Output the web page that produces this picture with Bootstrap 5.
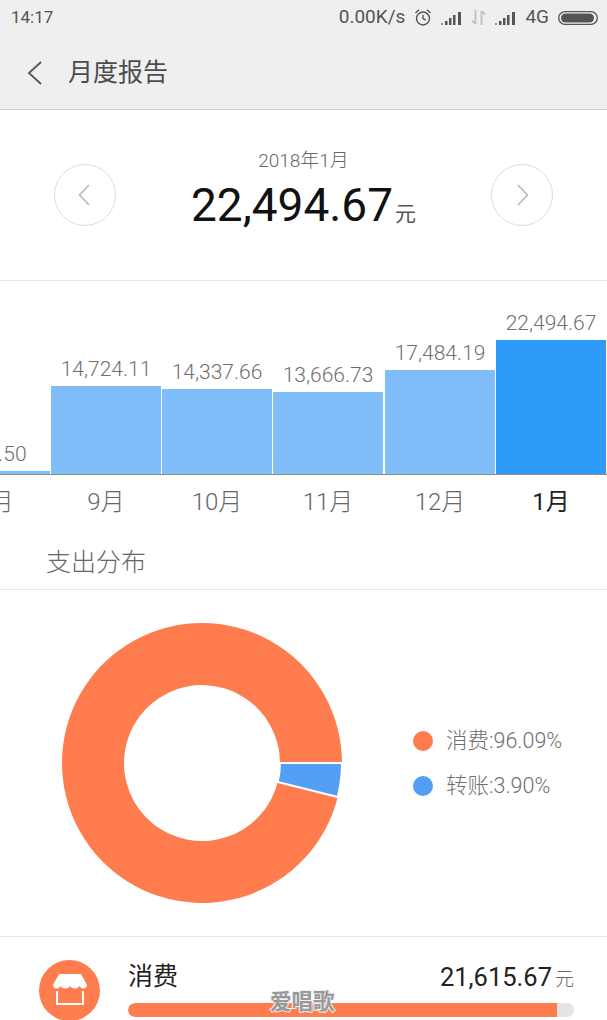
<!DOCTYPE html>
<html lang="zh">
<head>
  <meta charset="UTF-8">
  <meta name="viewport" content="width=device-width, initial-scale=1.0">
  <title>月度报告</title>
  <link href="https://cdn.jsdelivr.net/npm/bootstrap@5.3.3/dist/css/bootstrap.min.css" rel="stylesheet">
  <style>
    html, body { height: 1020px; overflow: hidden; }
    body {
      font-family: Roboto, "Noto Sans CJK SC", sans-serif;
      background: #fff;
      color: #666;
    }
    .top-head { background: #efefef; height: 110px; border-bottom: 1px solid #d2d2d2; }
    .status-row { height: 38px; padding: 0 9px 3px 11px; font-size: 17px; color: #555; }
    .status-right { gap: 9px; font-size: 19px; }
    .status-right svg { flex: none; }
    .title-row { height: 71px; padding-left: 26px; gap: 25px; padding-bottom: 1px; }
    .title-text { font-size: 25px; color: #4c4c4c; }
    .month-sec { height: 171px; border-bottom: 1px solid #e4e4e4; padding: 0 54px; }
    .round-nav { width: 62px; height: 62px; border: 1px solid #dcdcdc; border-radius: 50%; }
    .month-mid { margin-bottom: 11px; }
    .month-label { font-size: 19px; font-weight: 300; color: #666; line-height: 24px; margin: 2px 0 5px; }
    .total-num { font-size: 46px; color: #111; line-height: 54px; }
    .total-unit { font-size: 21px; color: #555; margin-left: 2px; }
    .bars-wrap { height: 193px; margin-left: -60px; width: 667px; gap: 1px; }
    .bar-col { width: 110px; flex: none; }
    .bar-col:nth-child(5), .month-cell:nth-child(5) { margin-left: 1px; }
    .bar-num { font-size: 21px; color: #6f6f6f; line-height: 26px; margin-bottom: 4px; font-weight: 300; white-space: nowrap; text-align: center; }
    .bar-fill { background: #7fbdf8; width: 100%; }
    .bar-col-on .bar-fill { background: #2e9bf8; }
    .bar-base { height: 1px; background: #8b8b8b; }
    .month-row { margin-left: -60px; width: 667px; gap: 1px; height: 52px; }
    .month-cell { width: 110px; flex: none; text-align: center; font-size: 24px; font-weight: 300; color: #666; line-height: 54px; }
    .month-on { color: #222; font-weight: 400; }
    .spread-head { height: 63px; padding: 0 46px 0; font-size: 25px; font-weight: 300; color: #666; border-bottom: 1px solid #e6e6e6; line-height: 72px; }
    .donut-sec { height: 347px; border-bottom: 1px solid #e6e6e6; padding-left: 62px; }
    .legend-box { margin-left: 71px; gap: 13px; }
    .legend-row { gap: 13px; font-size: 21.5px; color: #6f6f6f; line-height: 32px; font-weight: 300; }
    .legend-dot { width: 20px; height: 20px; border-radius: 50%; }
    .dot-orange { background: #ff7c4f; }
    .dot-blue { background: #559ef5; }
    .spend-row { padding: 23px 33px 0 39px; gap: 28px; }
    .shop-round { width: 61px; height: 61px; border-radius: 50%; background: #ff7c4f; flex: none; }
    .spend-name { font-size: 25px; color: #222; line-height: 34px; }
    .spend-num { font-size: 25.500px; color: #222; line-height: 34px; }
    .spend-unit { font-size: 19px; font-weight: 300; color: #666; margin-left: 3px; }
    .spend-bar { height: 14px; background: #e4e4e4; border-radius: 7px; margin-top: 8px; overflow: hidden; }
    .spend-fill { height: 100%; background: #ff7c4f; border-radius: 7px 0 0 7px; }
    .wm-text {
      position: absolute; left: 270px; top: 989px;
      font-size: 21.5px; font-weight: 700; line-height: 26px; color: #999;
      -webkit-text-stroke: 2px #f1f1f1; paint-order: stroke fill;
    }
  </style>
</head>
<body>

  <div class="top-head">
    <div class="status-row d-flex align-items-center justify-content-between">
      <span>14:17</span>
      <div class="status-right d-flex align-items-center">
        <span>0.00K/s</span>
        <svg width="18" height="19" viewBox="0 0 18 19" fill="none" stroke="#555" stroke-width="1.400">
          <circle cx="9" cy="10.500" r="6.500"/><path d="M9 6.800v3.700l2.800 1.600M1.500 5 5 1.800M16.500 5 13 1.800"/>
        </svg>
        <svg width="21" height="14" viewBox="0 0 21 14" fill="#555">
          <rect x="0" y="12" width="2" height="2" opacity=".6"/><rect x="4" y="10" width="2.500" height="4"/><rect x="8" y="7" width="2.500" height="7"/><rect x="12" y="4" width="2.500" height="10"/><rect x="17" y="1" width="3" height="13"/>
        </svg>
        <svg width="15" height="17" viewBox="0 0 15 17" fill="none" stroke="#c4c4c4" stroke-width="2">
          <path d="M4.500 1v14M1 11.500 4.500 15M10.500 16V2M14 5.500 10.500 2"/>
        </svg>
        <svg width="21" height="14" viewBox="0 0 21 14" fill="#555">
          <rect x="0" y="12" width="2" height="2" opacity=".6"/><rect x="4" y="10" width="2.500" height="4"/><rect x="8" y="7" width="2.500" height="7"/><rect x="12" y="4" width="2.500" height="10"/><rect x="17" y="1" width="3" height="13"/>
        </svg>
        <span>4G</span>
        <svg width="40" height="14" viewBox="0 0 40 14">
          <rect x=".7" y=".7" width="38.600" height="12.600" rx="6.300" fill="none" stroke="#555" stroke-width="1.300"/>
          <rect x="3" y="2.500" width="33" height="9" rx="4.500" fill="#555"/>
        </svg>
      </div>
    </div>
    <div class="title-row d-flex align-items-center">
      <svg width="17" height="26" viewBox="0 0 17 26" fill="none" stroke="#555" stroke-width="1.800"><path d="M15 2 3 13l12 11"/></svg>
      <span class="title-text">月度报告</span>
    </div>
  </div>

  <div class="month-sec d-flex align-items-center justify-content-between">
    <div class="round-nav d-flex align-items-center justify-content-center">
      <svg width="14" height="24" viewBox="0 0 14 24" fill="none" stroke="#b5b5b5" stroke-width="1.500"><path d="M11 2 1.500 12 11 22"/></svg>
    </div>
    <div class="text-center month-mid">
      <div class="month-label">2018年1月</div>
      <div><span class="total-num">22,494.67</span><span class="total-unit">元</span></div>
    </div>
    <div class="round-nav d-flex align-items-center justify-content-center">
      <svg width="14" height="24" viewBox="0 0 14 24" fill="none" stroke="#b5b5b5" stroke-width="1.500"><path d="M3 2l9.500 10L3 22"/></svg>
    </div>
  </div>

  <div class="bars-wrap d-flex align-items-end" id="bars"></div>
  <div class="bar-base"></div>
  <div class="month-row d-flex" id="months"></div>

  <div class="spread-head">支出分布</div>

  <div class="donut-sec d-flex align-items-center">
    <svg width="280" height="282" viewBox="-140 -141 280 282">
      <path d="M135.800 34A140 140 0 1 1 140 0L78 0A78 78 0 1 0 75.700 18.900Z" fill="#ff7c4f"/>
      <path d="M78 0L140 0A140 140 0 0 1 135.800 34L75.700 18.900A78 78 0 0 0 78 0Z" fill="#559ef5" stroke="#fff" stroke-width="2"/>
    </svg>
    <div class="legend-box d-flex flex-column">
      <div class="legend-row d-flex align-items-center"><span class="legend-dot dot-orange"></span><span>消费:96.09%</span></div>
      <div class="legend-row d-flex align-items-center"><span class="legend-dot dot-blue"></span><span>转账:3.90%</span></div>
    </div>
  </div>

  <div class="spend-row d-flex">
    <div class="shop-round d-flex align-items-center justify-content-center">
      <svg width="38" height="38" viewBox="0 0 38 38">
        <path d="M8 2h22l6 11c0 2-1.500 3.500-3.500 3.500S29 15 28.500 14c-.5 1-2 2.500-4.700 2.500S19.500 15 19 14c-.5 1-2 2.500-4.700 2.500S10 15 9.500 14C9 15 7.500 16.500 5.500 16.500S2 15 2 13Z" fill="#fff"/>
        <path d="M6 19v13h26V19" fill="none" stroke="#fff" stroke-width="2"/>
      </svg>
    </div>
    <div class="flex-grow-1">
      <div class="d-flex justify-content-between align-items-center">
        <span class="spend-name">消费</span>
        <span><span class="spend-num">21,615.67</span><span class="spend-unit">元</span></span>
      </div>
      <div class="spend-bar"><div class="spend-fill" style="width: 96.09%"></div></div>
    </div>
  </div>

  <div class="wm-text">爱唱歌</div>

  <script>
    const data = [
      { m: "8月", v: "520.50", h: 3 },
      { m: "9月", v: "14,724.11", h: 88 },
      { m: "10月", v: "14,337.66", h: 85 },
      { m: "11月", v: "13,666.73", h: 82 },
      { m: "12月", v: "17,484.19", h: 104 },
      { m: "1月", v: "22,494.67", h: 134, on: true }
    ];
    const bars = document.getElementById("bars");
    const months = document.getElementById("months");
    data.forEach(d => {
      bars.insertAdjacentHTML("beforeend",
        `<div class="bar-col ${d.on ? "bar-col-on" : ""}"><div class="bar-num">${d.v}</div><div class="bar-fill" style="height:${d.h}px"></div></div>`);
      months.insertAdjacentHTML("beforeend",
        `<div class="month-cell ${d.on ? "month-on" : ""}">${d.m}</div>`);
    });
  </script>
  <script src="https://cdn.jsdelivr.net/npm/bootstrap@5.3.3/dist/js/bootstrap.bundle.min.js"></script>
</body>
</html>
